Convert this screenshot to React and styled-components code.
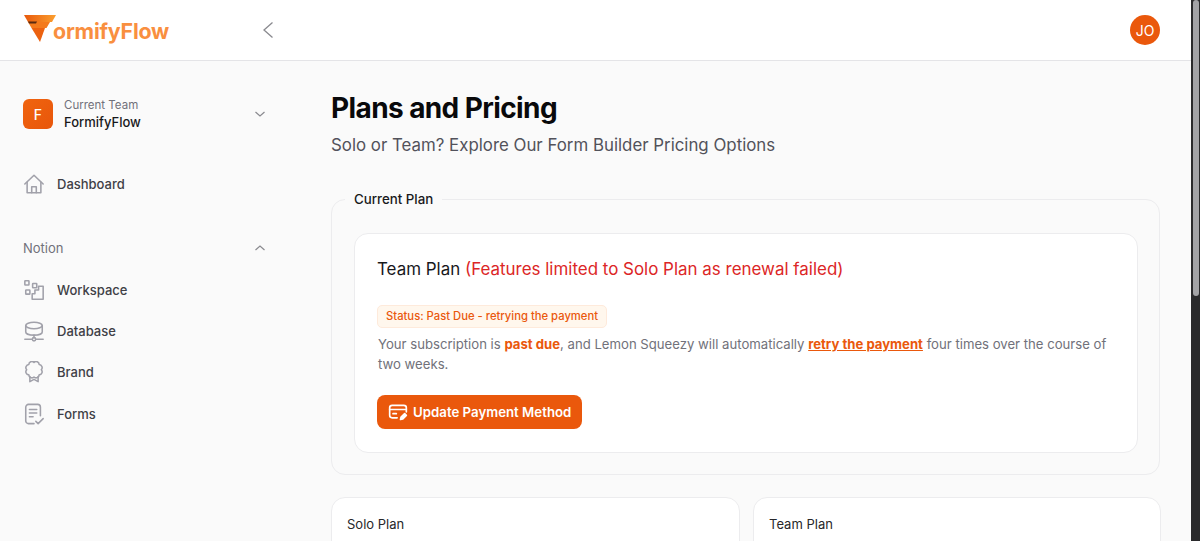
import styled, { createGlobalStyle } from 'styled-components'
import { useId } from 'react'

const GlobalStyle = createGlobalStyle`
  * { box-sizing: border-box; }
  html, body { margin: 0; height: 100%; overflow: hidden; }
  body {
    font-family: Inter, "Liberation Sans", sans-serif;
    background: #fafafa;
    color: #18181b;
  }
`

const Page = styled.div`
  height: 541px;
  display: flex;
  flex-direction: column;
  overflow: hidden;
  position: relative;
`

const Header = styled.header`
  flex: none;
  height: 61px;
  background: #fff;
  border-bottom: 1px solid #e4e4e7;
  display: flex;
  align-items: center;
  padding: 0 40px 0 23px;
`

const BrandBox = styled.div`
  display: flex;
  align-items: center;
  width: 239px;
`

const LogoText = styled.span`
  font-size: 21.4px;
  font-weight: 700;
  letter-spacing: -0.2px;
  color: #f98f3f;
  margin-left: -6px;
  margin-top: 2px;
`

const BackButton = styled.button`
  border: 0;
  background: none;
  padding: 0;
  display: flex;
  color: #8a8a8f;
`

const Avatar = styled.div`
  margin-left: auto;
  width: 30px;
  height: 30px;
  border-radius: 50%;
  background: #ea580c;
  color: #fff;
  font-size: 14px;
  display: flex;
  align-items: center;
  justify-content: center;
`

const Body = styled.div`
  flex: 1;
  display: flex;
  min-height: 0;
`

const Sidebar = styled.aside`
  flex: none;
  width: 331px;
  padding: 37px 31px 0 23px;
`

const TeamRow = styled.div`
  display: flex;
  align-items: center;
  width: 243px;
  height: 32px;
`

const TeamBadge = styled.div`
  width: 30px;
  height: 30px;
  border-radius: 6px;
  background: linear-gradient(135deg, #f0640f, #e8560b);
  color: #fff;
  font-size: 14px;
  font-weight: 500;
  display: flex;
  align-items: center;
  justify-content: center;
`

const TeamText = styled.div`
  margin-left: 11px;
  display: flex;
  flex-direction: column;
  gap: 2px;
`

const TeamLabel = styled.span`
  font-size: 11.5px;
  line-height: 14px;
  color: #71717a;
`

const TeamName = styled.span`
  font-size: 13px;
  line-height: 17px;
  font-weight: 500;
`

const Chevron = styled.span`
  margin-left: auto;
  display: flex;
  color: #8a8a8f;
`

const NavItem = styled.a`
  display: flex;
  align-items: center;
  gap: 12px;
  height: 24px;
  margin-top: ${p => p.$gap}px;
  font-size: 13px;
  font-weight: 500;
  color: #3f3f46;
  svg { flex: none; color: #a1a1aa; }
`

const SectionRow = styled.div`
  display: flex;
  align-items: center;
  width: 243px;
  height: 20px;
  margin-top: 42px;
  font-size: 13px;
  color: #71717a;
`

const Main = styled.main`
  flex: 1;
  min-width: 0;
  padding: 30px 40px 0 0;
`

const Title = styled.h1`
  margin: 0;
  font-size: 28px;
  line-height: 34px;
  font-weight: 700;
  letter-spacing: -0.6px;
  color: #09090b;
`

const Subtitle = styled.p`
  margin: 8px 0 0;
  font-size: 16.85px;
  line-height: 24px;
  color: #52525b;
`

const Fieldset = styled.fieldset`
  margin: 33px 0 0;
  padding: 25px 21px 22px 22px;
  border: 1px solid #ececee;
  border-radius: 14px;
  height: 285px;
  min-width: 0;
`

const Legend = styled.legend`
  padding: 0 9px;
  margin-left: -9px;
  font-size: 13.3px;
  line-height: 18px;
  font-weight: 500;
  color: #18181b;
`

const Card = styled.div`
  background: #fff;
  border: 1px solid #ececee;
  border-radius: 14px;
  padding: ${p => p.$padding};
  min-width: 0;
`

const PlanHeading = styled.h2`
  margin: 0 0 0 -1px;
  font-size: 16.95px;
  line-height: 24px;
  font-weight: 400;
  color: #18181b;
`

const Warning = styled.span`
  color: #dc2626;
`

const StatusPill = styled.div`
  display: inline-block;
  margin-top: 24px;
  margin-left: -1px;
  padding: 0 8px;
  height: 23px;
  line-height: 21px;
  border: 1px solid #feeadb;
  border-radius: 5px;
  background: #fff7ed;
  color: #ea580c;
  font-size: 11.25px;
  font-weight: 500;
`

const Description = styled.p`
  margin: 6px 0 0;
  font-size: 13.15px;
  line-height: 20px;
  color: #71717a;
`

const Strong = styled.strong`
  color: #ea580c;
  font-weight: 700;
`

const StrongLink = styled(Strong)`
  text-decoration: underline;
`

const PayButton = styled.button`
  margin: 21px 0 0 -1px;
  height: 34px;
  padding: 0 11px;
  display: flex;
  align-items: center;
  gap: 5px;
  border: 0;
  border-radius: 8px;
  background: #ea580c;
  color: #fff;
  font: 600 13.25px Inter, "Liberation Sans", sans-serif;
`

const PlanGrid = styled.div`
  display: grid;
  grid-template-columns: 409px 408px;
  gap: 13px;
  margin-top: 22px;
`

const PlanName = styled.div`
  font-size: 13px;
  line-height: 18px;
  color: #27272a;
`

const ScrollTrack = styled.div`
  position: absolute;
  top: 0;
  right: 0;
  bottom: 0;
  width: 9px;
  background: #2a2a2c;
  padding-left: 2px;
`

const ScrollThumb = styled.div`
  width: 6px;
  height: 296px;
  background: #a3a3a6;
  border-radius: 3px;
`

const Logo = () => {
  const id = useId()
  return (
    <svg width="36" height="32" viewBox="0 0 36 32">
      <defs>
        <linearGradient id={id} x1="0" y1="0" x2="1" y2="0">
          <stop offset="0" stopColor="#e8590c" />
          <stop offset="1" stopColor="#fb9f2f" />
        </linearGradient>
      </defs>
      <path d="M1 1 H33 L29 8 H5 Z" fill={`url(#${id})`} />
      <path d="M5 8 H27 L23.500 14 H8.500 Z" fill="#f47a1c" />
      <path d="M8.500 14 H22 L17 28 Z" fill="#ec6210" />
      <path d="M5 7.500 H14 L13 9.500 H6 Z" fill="#5a2a10" />
    </svg>
  )
}

const icon = { width: 22, height: 22, viewBox: '0 0 24 24', fill: 'none', stroke: 'currentColor', strokeWidth: 1.7, strokeLinecap: 'round', strokeLinejoin: 'round' }

const HomeIcon = () => (
  <svg {...icon}>
    <path d="M2 12 12 2.500 22 12" />
    <path d="M4.500 10v11.500h15V10" />
    <path d="M9.500 21.500V15h5v6.500" />
  </svg>
)

const WorkspaceIcon = () => (
  <svg {...icon}>
    <rect x="2" y="2" width="4.500" height="4.500" rx="0.500" />
    <rect x="10.500" y="5" width="4.500" height="4.500" rx="0.500" />
    <rect x="3" y="12" width="4.500" height="4.500" rx="0.500" />
    <path d="M17 8h5v14H10v-6h3v-4h4z" />
  </svg>
)

const DatabaseIcon = () => (
  <svg {...icon}>
    <ellipse cx="12" cy="6" rx="9" ry="3.500" />
    <path d="M3 6v7c0 2 4 3.500 9 3.500s9-1.500 9-3.500V6" />
    <path d="M12 16.500v2.500" />
    <circle cx="12" cy="21" r="1.800" />
    <path d="M2 21h8M14 21h8" />
  </svg>
)

const BrandIcon = () => (
  <svg {...icon}>
    <path d="M20 9.500a3.400 3.400 0 0 1-2.340 5.660A3.400 3.400 0 0 1 12 17.500a3.400 3.400 0 0 1-5.660-2.340A3.400 3.400 0 0 1 4 9.500a3.400 3.400 0 0 1 2.340-5.660A3.400 3.400 0 0 1 12 1.500a3.400 3.400 0 0 1 5.660 2.340A3.400 3.400 0 0 1 20 9.500z" />
    <path d="M7.500 17v5.500l4.500-2.500 4.500 2.500V17" />
  </svg>
)

const FormsIcon = () => (
  <svg {...icon}>
    <path d="M12 22.500H6a3 3 0 0 1-3-3v-15a3 3 0 0 1 3-3h10a3 3 0 0 1 3 3V14" />
    <path d="M7 7h8M7 11h8M7 15h4" />
    <path d="M14 20l2.500 2.500L22 17" />
  </svg>
)

const CardEditIcon = () => (
  <svg width="20" height="20" viewBox="0 0 24 24" fill="none" stroke="currentColor" strokeWidth="2" strokeLinecap="round" strokeLinejoin="round">
    <path d="M11 19H5a3 3 0 0 1-3-3V7a3 3 0 0 1 3-3h14a3 3 0 0 1 3 3v5" />
    <path d="M2 9h20" />
    <path d="M6 14h4" />
    <path d="M15 21l.7-2.800 4.300-4.200 2 2-4.200 4.300z" fill="currentColor" />
  </svg>
)

const ChevronDown = () => (
  <svg width="12" height="12" viewBox="0 0 12 12" fill="none" stroke="currentColor" strokeWidth="1.200"><path d="M1.500 4l4.500 4 4.500-4" /></svg>
)

const ChevronUp = () => (
  <svg width="12" height="12" viewBox="0 0 12 12" fill="none" stroke="currentColor" strokeWidth="1.200"><path d="M1.500 8l4.500-4 4.500 4" /></svg>
)

const App = () => {
  return (
    <Page>
      <GlobalStyle />
      <Header>
        <BrandBox>
          <Logo />
          <LogoText>ormifyFlow</LogoText>
        </BrandBox>
        <BackButton>
          <svg width="12" height="18" viewBox="0 0 12 18" fill="none" stroke="currentColor" strokeWidth="1.300"><path d="M10.500 1.500 2 9l8.500 7.500" /></svg>
        </BackButton>
        <Avatar>JO</Avatar>
      </Header>
      <Body>
        <Sidebar>
          <TeamRow>
            <TeamBadge>F</TeamBadge>
            <TeamText>
              <TeamLabel>Current Team</TeamLabel>
              <TeamName>FormifyFlow</TeamName>
            </TeamText>
            <Chevron><ChevronDown /></Chevron>
          </TeamRow>
          <NavItem $gap={42}><HomeIcon />Dashboard</NavItem>
          <SectionRow>
            Notion
            <Chevron><ChevronUp /></Chevron>
          </SectionRow>
          <NavItem $gap={20}><WorkspaceIcon />Workspace</NavItem>
          <NavItem $gap={17}><DatabaseIcon />Database</NavItem>
          <NavItem $gap={17}><BrandIcon />Brand</NavItem>
          <NavItem $gap={18}><FormsIcon />Forms</NavItem>
        </Sidebar>
        <Main>
          <Title>Plans and Pricing</Title>
          <Subtitle>Solo or Team? Explore Our Form Builder Pricing Options</Subtitle>
          <Fieldset>
            <Legend>Current Plan</Legend>
            <Card $padding="23px 23px 23px 23px">
              <PlanHeading>Team Plan <Warning>(Features limited to Solo Plan as renewal failed)</Warning></PlanHeading>
              <StatusPill>Status: Past Due - retrying the payment</StatusPill>
              <Description>
                Your subscription is <Strong>past due</Strong>, and Lemon Squeezy will automatically <StrongLink>retry the payment</StrongLink> four times over the course of two weeks.
              </Description>
              <PayButton><CardEditIcon />Update Payment Method</PayButton>
            </Card>
          </Fieldset>
          <PlanGrid>
            <Card $padding="17px 15px 40px"><PlanName>Solo Plan</PlanName></Card>
            <Card $padding="17px 15px 40px"><PlanName>Team Plan</PlanName></Card>
          </PlanGrid>
        </Main>
      </Body>
      <ScrollTrack><ScrollThumb /></ScrollTrack>
    </Page>
  )
}

export default App
